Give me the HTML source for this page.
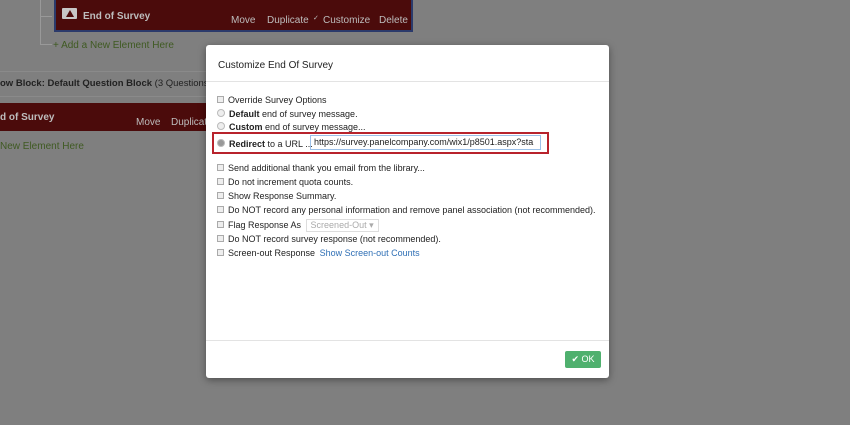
<!DOCTYPE html>
<html><head><meta charset="utf-8"><style>
body{margin:0;width:850px;height:425px;overflow:hidden;background:#7f7f7f;font-family:"Liberation Sans",sans-serif;position:relative;color:#1e1e1e}
.abs{position:absolute}
.bar{background:#4b0b0b;color:#bdbdbd;font-size:10px}
.modal{left:206px;top:45px;width:403px;height:333px;background:#fff;border-radius:3px;box-shadow:0 2px 8px rgba(0,0,0,.4)}
.opt{position:absolute;left:11px;font-size:9px;color:#222;white-space:nowrap}
.cb{display:inline-block;width:5px;height:5px;border:1px solid #aaa;background:#eee;margin-right:4px;vertical-align:0}
.rd{display:inline-block;width:6px;height:6px;border-radius:50%;border:1px solid #bbb;background:#eee;margin-right:4px;vertical-align:0}
</style></head><body>
<div class="abs" style="left:40px;top:0;width:1px;height:44px;background:#999"></div>
<div class="abs" style="left:40px;top:16px;width:12px;height:1px;background:#999"></div>
<div class="abs" style="left:40px;top:44px;width:12px;height:1px;background:#999"></div>
<div class="abs bar" style="left:54px;top:0;width:355px;height:30px;border:2px solid #2b3a6b;border-top:none">
 <div class="abs" style="left:6px;top:8px;width:15px;height:11px;background:#c7c7c7;border-radius:1px"></div>
 <div class="abs" style="left:10px;top:10px;width:0;height:0;border-left:4px solid transparent;border-right:4px solid transparent;border-bottom:7px solid #4b0b0b"></div>
 <div class="abs" style="left:27px;top:11px;font-weight:bold;font-size:10px">End of Survey</div>
 <div class="abs" style="left:175px;top:15px">Move</div>
 <div class="abs" style="left:211px;top:15px">Duplicate</div>
 <div class="abs" style="left:257px;top:14px;font-size:7px">✓</div>
 <div class="abs" style="left:267px;top:15px">Customize</div>
 <div class="abs" style="left:323px;top:15px">Delete</div>
</div>
<div class="abs" style="left:53px;top:40px;font-size:10px;color:#3f5a22">+ Add a New Element Here</div>
<div class="abs" style="left:0;top:71px;width:206px;height:1px;background:#8a8a8a"></div>
<div class="abs" style="left:0;top:78px;font-size:9.5px;color:#222;white-space:nowrap"><b>ow Block: Default Question Block</b> (3 Questions)</div>
<div class="abs" style="left:0;top:96px;width:206px;height:1px;background:#8a8a8a"></div>
<div class="abs bar" style="left:0;top:103px;width:206px;height:28px">
 <div class="abs" style="left:0;top:9px;font-weight:bold">d of Survey</div>
 <div class="abs" style="left:136px;top:14px">Move</div>
 <div class="abs" style="left:171px;top:14px">Duplicate</div>
</div>
<div class="abs" style="left:0;top:141px;font-size:10px;color:#3f5a22">New Element Here</div>

<div class="abs modal">
 <div class="abs" style="left:12px;top:15px;font-size:10px;color:#222">Customize End Of Survey</div>
 <div class="abs" style="left:0;top:36px;width:403px;height:1px;background:#e3e3e3"></div>
 <div class="opt" style="top:50px"><span class="cb" style="font-size:5px"></span>Override Survey Options</div>
 <div class="opt" style="top:64px"><span class="rd"></span><b>Default</b> end of survey message.</div>
 <div class="opt" style="top:77px"><span class="rd"></span><b>Custom</b> end of survey message...</div>
 <div class="abs" style="left:6px;top:87px;width:333px;height:18px;border:2px solid #b8232c"></div>
 <div class="opt" style="top:94px"><span class="rd" style="background:#999"></span><b>Redirect</b> to a URL ...</div>
 <div class="abs" style="left:104px;top:90px;width:226px;height:13px;border:1px solid #9cc0e8;font-size:9px;line-height:13px;padding-left:3px;overflow:hidden;white-space:nowrap;color:#222">https://survey.panelcompany.com/wix1/p8501.aspx?sta</div>
 <div class="opt" style="top:118px"><span class="cb"></span>Send additional thank you email from the library...</div>
 <div class="opt" style="top:132px"><span class="cb"></span>Do not increment quota counts.</div>
 <div class="opt" style="top:146px"><span class="cb"></span>Show Response Summary.</div>
 <div class="opt" style="top:160px"><span class="cb"></span>Do NOT record any personal information and remove panel association (not recommended).</div>
 <div class="opt" style="top:174px"><span class="cb"></span>Flag Response As <span style="display:inline-block;border:1px solid #ddd;color:#aaa;padding:0 4px;margin-left:2px">Screened-Out ▾</span></div>
 <div class="opt" style="top:189px"><span class="cb"></span>Do NOT record survey response (not recommended).</div>
 <div class="opt" style="top:203px"><span class="cb"></span>Screen-out Response <span style="color:#2f6fb5;margin-left:2px">Show Screen-out Counts</span></div>
 <div class="abs" style="left:0;top:295px;width:403px;height:1px;background:#e3e3e3"></div>
 <div class="abs" style="left:359px;top:306px;width:36px;height:17px;background:#4fb06e;border-radius:2px;color:#fff;font-size:9px;line-height:17px;text-align:center">✔ OK</div>
</div>
</body></html>
